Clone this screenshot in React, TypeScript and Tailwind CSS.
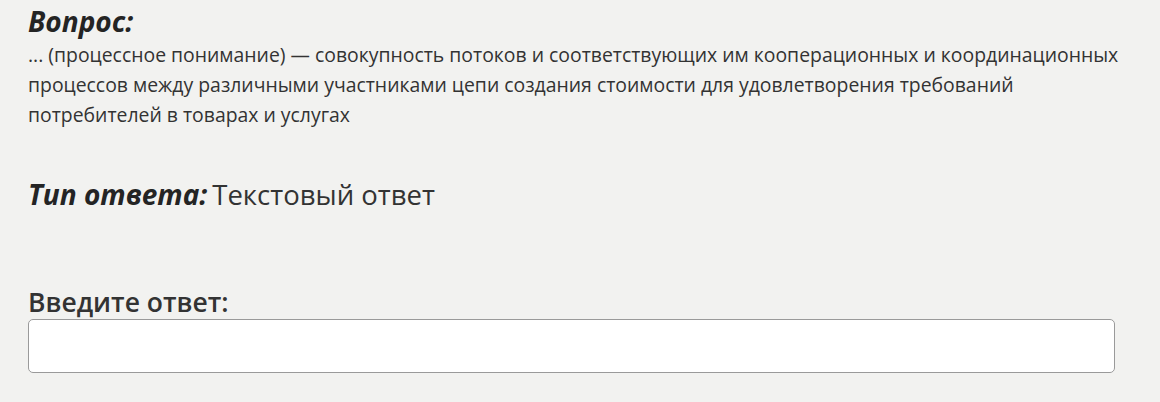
export default function App() {
  return (
    <div
      className="min-h-[402px] w-[1160px] bg-[#f2f2f0] pl-[28px] pr-[4px] pt-[3px] text-[#242424]"
      style={{ fontFamily: '"Open Sans", "Noto Sans", sans-serif' }}
    >
      <div className="text-[28px] font-bold italic leading-[36px]">Вопрос:</div>
      <p className="mt-[1px] whitespace-nowrap text-[19.4px] leading-[30px] text-[#333]">
        ... (процессное понимание) — совокупность потоков и соответствующих им кооперационных и координационных
        <br />
        процессов между различными участниками цепи создания стоимости для удовлетворения требований
        <br />
        потребителей в товарах и услугах
      </p>
      <div className="mt-[46px] flex items-baseline gap-[5px] text-[28px] leading-[36px]">
        <span className="font-bold italic">Тип ответа:</span>
        <span className="text-[27.5px] font-normal text-[#333]">Текстовый ответ</span>
      </div>
      <div className="mt-[72px] text-[26.5px] font-semibold leading-[34px] text-[#333]">Введите ответ:</div>
      <input
        type="text"
        className="block h-[54px] w-[1087px] rounded-[5px] border border-[#9a9a9a] bg-white px-3 outline-none"
      />
    </div>
  );
}
